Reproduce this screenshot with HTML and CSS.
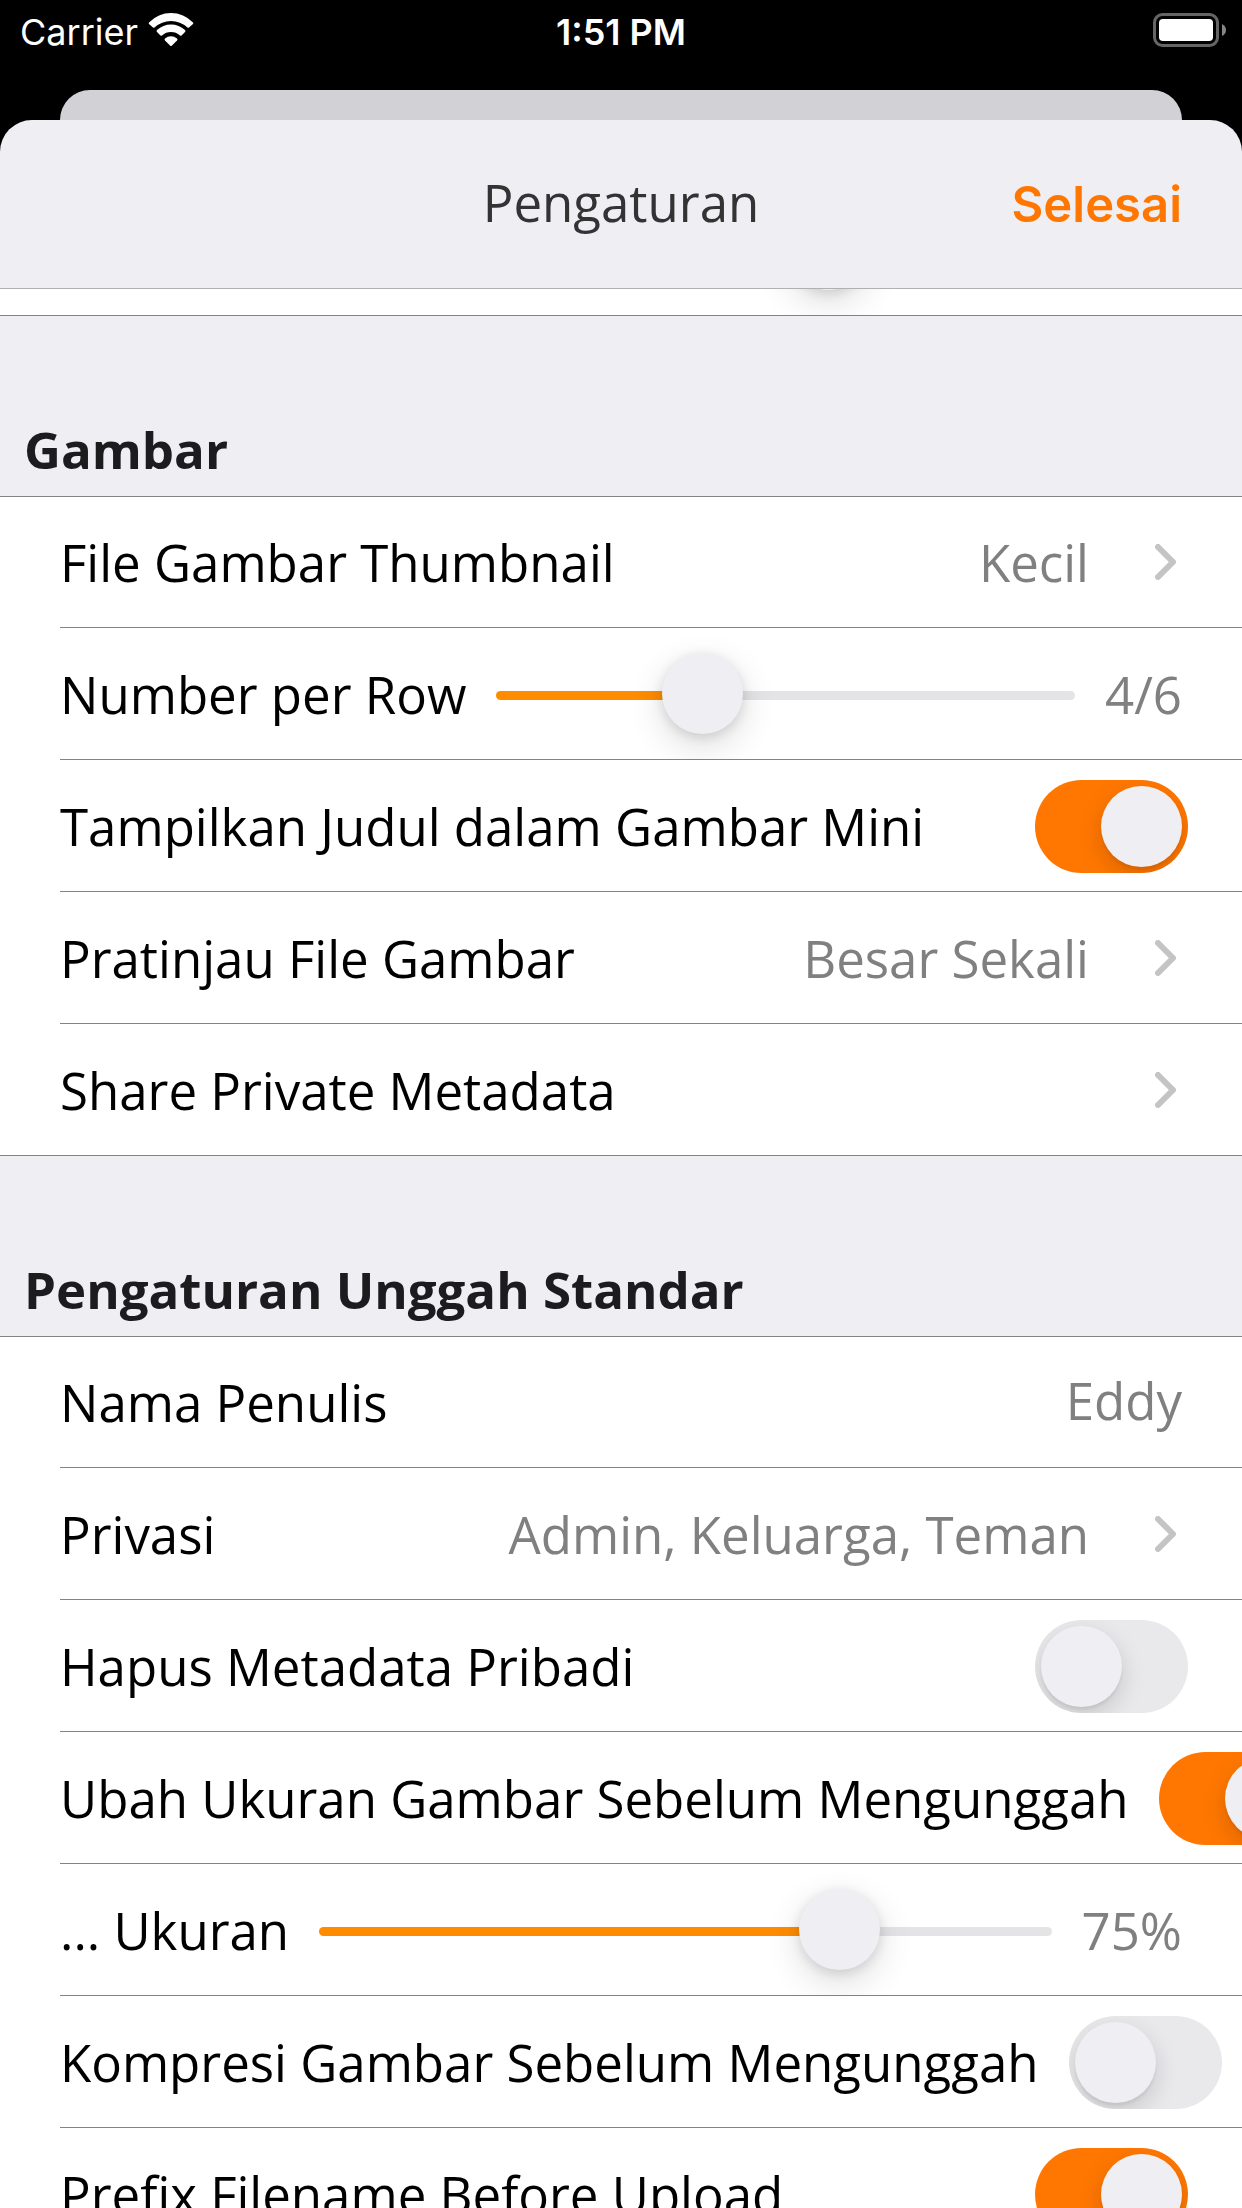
FILE: index.html
```html
<!DOCTYPE html>
<html lang="id">
<head>
  <meta charset="utf-8">
  <meta name="viewport" content="width=device-width, initial-scale=1">
  <title>Pengaturan</title>
  <link rel="stylesheet" href="styles.css">
</head>
<body>
  <div class="status-bar">
    <div class="carrier">
      <span>Carrier</span>
      <svg class="wifi" viewBox="0 0 46 34" aria-hidden="true">
        <path d="M1 9.500 A30.500 30.500 0 0 1 45 9.500 Q45.500 10.500 45 11 L41 14.500 Q40 15 39.500 14.500 A24.500 24.500 0 0 0 6.500 14.500 Q6 15 5 14.500 L1 11 Q0.500 10.500 1 9.500 Z"/>
        <path d="M9 17 A20.500 20.500 0 0 1 37 17 Q38 18 37 19 L33.500 22.500 Q32.500 23 32 22.500 A13.500 13.500 0 0 0 14 22.500 Q13.500 23 12.500 22.500 L9 19 Q8 18 9 17 Z"/>
        <path d="M17 25.500 A9.500 9.500 0 0 1 29 25.500 Q30 26.500 29 27.500 L24 32.500 Q23 33.500 22 32.500 L17 27.500 Q16 26.500 17 25.500 Z"/>
      </svg>
    </div>
    <time class="clock">1:51 PM</time>
    <svg class="battery" viewBox="0 0 73 34" aria-hidden="true">
      <rect class="battery-case" x="1.500" y="1.500" width="63" height="31" rx="8"/>
      <rect class="battery-level" x="6" y="6" width="54" height="22" rx="4"/>
      <path class="battery-tip" d="M69 11 Q73 13 73 17 Q73 21 69 23 Z"/>
    </svg>
  </div>
  <div class="back-sheet"></div>
  <div class="sheet">
    <header class="nav-bar">
      <h1 class="nav-title">Pengaturan</h1>
      <button class="nav-done" type="button">Selesai</button>
    </header>
    <main class="settings">
      <div class="group group-scrolled">
        <div class="row">
          <input class="slider" type="range" min="0" max="100" value="70" aria-label="Jumlah" style="--fill: 70%">
        </div>
      </div>

      <h2 class="section-title">Gambar</h2>
      <div class="group">
        <button class="row row-link" type="button">
          <span class="label">File Gambar Thumbnail</span>
          <span class="value">Kecil</span>
          <svg class="chevron" viewBox="0 0 21 36" aria-hidden="true"><path d="M3 3 L18 18 L3 33"/></svg>
        </button>
        <div class="row">
          <label class="label" for="per-row">Number per Row</label>
          <input class="slider" id="per-row" type="range" min="3" max="6" value="4" style="--fill: 33%">
          <output class="value" for="per-row">4/6</output>
        </div>
        <div class="row row-switch">
          <label class="label" for="show-title">Tampilkan Judul dalam Gambar Mini</label>
          <input class="switch" id="show-title" type="checkbox" role="switch" checked>
        </div>
        <button class="row row-link" type="button">
          <span class="label">Pratinjau File Gambar</span>
          <span class="value">Besar Sekali</span>
          <svg class="chevron" viewBox="0 0 21 36" aria-hidden="true"><path d="M3 3 L18 18 L3 33"/></svg>
        </button>
        <button class="row row-link" type="button">
          <span class="label">Share Private Metadata</span>
          <svg class="chevron" viewBox="0 0 21 36" aria-hidden="true"><path d="M3 3 L18 18 L3 33"/></svg>
        </button>
      </div>

      <h2 class="section-title">Pengaturan Unggah Standar</h2>
      <div class="group">
        <div class="row">
          <label class="label" for="author">Nama Penulis</label>
          <input class="value text-field" id="author" type="text" value="Eddy">
        </div>
        <button class="row row-link" type="button">
          <span class="label">Privasi</span>
          <span class="value">Admin, Keluarga, Teman</span>
          <svg class="chevron" viewBox="0 0 21 36" aria-hidden="true"><path d="M3 3 L18 18 L3 33"/></svg>
        </button>
        <div class="row row-switch">
          <label class="label" for="strip-metadata">Hapus Metadata Pribadi</label>
          <input class="switch" id="strip-metadata" type="checkbox" role="switch">
        </div>
        <div class="row row-switch">
          <label class="label" for="resize">Ubah Ukuran Gambar Sebelum Mengunggah</label>
          <input class="switch" id="resize" type="checkbox" role="switch" checked>
        </div>
        <div class="row">
          <label class="label" for="size">... Ukuran</label>
          <input class="slider" id="size" type="range" min="5" max="100" value="75" style="--fill: 74%">
          <output class="value" for="size">75%</output>
        </div>
        <div class="row row-switch">
          <label class="label" for="compress">Kompresi Gambar Sebelum Mengunggah</label>
          <input class="switch" id="compress" type="checkbox" role="switch">
        </div>
        <div class="row row-switch">
          <label class="label" for="prefix">Prefix Filename Before Upload</label>
          <input class="switch" id="prefix" type="checkbox" role="switch" checked>
        </div>
      </div>
    </main>
  </div>
</body>
</html>
```
FILE: styles.css
```css
:root {
  --accent: #ff7700;
  --slider-fill: #ff8c00;
  --surface: #efeef3;
  --line: #838383;
  --text-size: 51px;
  --system-font: Inter, "Liberation Sans", sans-serif;
}

* {
  box-sizing: border-box;
}

body {
  display: flex;
  flex-direction: column;
  height: 100vh;
  margin: 0;
  overflow: hidden;
  background: #000;
  color: #000;
  font-family: "Open Sans", "Noto Sans", sans-serif;
  font-size: var(--text-size);
  line-height: 70px;
}

button,
input {
  margin: 0;
  border: 0;
  padding: 0;
  background: none;
  color: inherit;
  font: inherit;
}

/* Status bar */
.status-bar {
  flex: none;
  display: grid;
  grid-template-columns: 1fr auto 1fr;
  align-items: start;
  height: 90px;
  padding: 10px 16px 0;
  color: #fff;
  font-family: var(--system-font);
  font-size: 36px;
  line-height: 44px;
}

.carrier {
  display: flex;
  gap: 10px;
  padding-left: 4px;
}

.clock {
  font-weight: 600;
}

.wifi {
  width: 46px;
  height: 34px;
  margin-top: 3px;
  fill: #fff;
}

.battery {
  justify-self: end;
  width: 73px;
  height: 34px;
  margin-top: 3px;
}

.battery-case {
  fill: none;
  stroke: #656565;
  stroke-width: 3;
}

.battery-level {
  fill: #fff;
}

.battery-tip {
  fill: #858585;
}

/* Stacked sheets */
.back-sheet {
  flex: none;
  height: 30px;
  margin: 0 60px;
  border-radius: 30px 30px 0 0;
  background: #d2d1d6;
}

.sheet {
  flex: 1;
  display: flex;
  flex-direction: column;
  min-height: 0;
  overflow: hidden;
  border-radius: 32px 32px 0 0;
  background: var(--surface);
}

.nav-bar {
  flex: none;
  display: grid;
  grid-template-columns: 1fr auto 1fr;
  align-items: baseline;
  height: 169px;
  padding: 47px 60px 0;
  border-bottom: 1px solid #b0b0b2;
}

.nav-title {
  grid-column: 2;
  margin: 0;
  color: #333;
  font-size: var(--text-size);
  font-weight: 400;
}

.nav-done {
  justify-self: end;
  color: var(--accent);
  font-family: var(--system-font);
  font-size: 49px;
  font-weight: 600;
}

/* Settings list */
.settings {
  flex: 1;
  min-height: 0;
  overflow: hidden auto;
  scrollbar-width: none;
}

.section-title {
  display: flex;
  align-items: flex-end;
  height: 180px;
  margin: 0;
  padding: 0 24px 12px;
  color: #1c1c1e;
  font-size: var(--text-size);
  font-weight: 700;
}

.group {
  border: solid var(--line);
  border-width: 1px 0;
  background: #fff;
}

/* Group already moved up beneath the navigation bar */
.group-scrolled {
  margin-top: -106px;
  padding-left: 346px;
  padding-right: 150px;
}

.row {
  display: flex;
  align-items: center;
  gap: 30px;
  height: 132px;
  margin-left: 60px;
  padding-right: 60px;
  overflow: clip;
  border-bottom: 1px solid var(--line);
}

.row:first-child,
.row:last-child {
  height: 131px;
}

.row:last-child {
  border-bottom: 0;
}

.row-link {
  width: calc(100% - 60px);
  padding-right: 66px;
  text-align: left;
}

.row-switch {
  justify-content: space-between;
  padding-right: 54px;
}

.label {
  flex: none;
  white-space: nowrap;
}

.value {
  color: #808080;
  white-space: nowrap;
}

.row-link .value {
  margin-left: auto;
  margin-right: 36px;
}

.text-field {
  flex: 1;
  min-width: 0;
  height: 74px;
  padding-bottom: 4px;
  text-align: right;
}

.chevron {
  flex: none;
  width: 21px;
  height: 36px;
  margin-left: auto;
  fill: none;
  stroke: #c4c4c6;
  stroke-width: 6;
  stroke-linecap: round;
  stroke-linejoin: round;
}

.value + .chevron {
  margin-left: 0;
}

/* Switch */
.switch {
  flex: none;
  width: 153px;
  height: 93px;
  margin-top: 2px;
  padding: 6px;
  overflow: hidden;
  border-radius: 47px;
  appearance: none;
  background: #e9e9eb;
}

.switch::before {
  content: "";
  display: block;
  width: 81px;
  height: 81px;
  border-radius: 50%;
  background: var(--surface);
  box-shadow: 0 9px 24px rgba(0, 0, 0, 0.15), 0 3px 3px rgba(0, 0, 0, 0.06);
}

.switch:checked {
  background: var(--accent);
}

.switch:checked::before {
  margin-left: auto;
}

/* Slider */
.slider {
  flex: 1;
  min-width: 0;
  height: 85px;
  padding-top: 4px;
  appearance: none;
}

.slider::-webkit-slider-runnable-track {
  height: 9px;
  border-radius: 5px;
  background: linear-gradient(to right, var(--slider-fill) var(--fill), #e4e4e6 var(--fill));
}

.slider::-webkit-slider-thumb {
  width: 81px;
  height: 81px;
  margin-top: -38px;
  border-radius: 50%;
  appearance: none;
  background: var(--surface);
  box-shadow: 0 12px 36px rgba(0, 0, 0, 0.14), 0 3px 12px rgba(0, 0, 0, 0.12);
}
```
